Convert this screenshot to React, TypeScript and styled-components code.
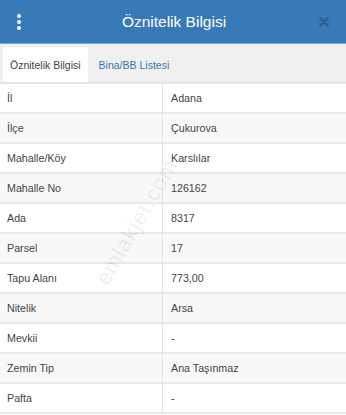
import styled, { createGlobalStyle } from 'styled-components';

const Global = createGlobalStyle`
  html, body {
    margin: 0;
    padding: 0;
    background: #fff;
  }
  body {
    font-family: 'Liberation Sans', Arial, sans-serif;
    -webkit-font-smoothing: antialiased;
  }
`;

const Page = styled.div`
  position: relative;
  width: 346px;
  height: 415px;
  overflow: hidden;
  background: #fff;
`;

const Header = styled.div`
  height: 43px;
  display: grid;
  grid-template-columns: 40px 1fr 40px;
  align-items: center;
  background: #3879b8;
  border-bottom: 1px solid #7aa7d6;
`;

const Title = styled.div`
  text-align: center;
  color: #fff;
  font-size: 15.5px;
  padding-left: 2px;
`;

const MenuButton = styled.div`
  display: flex;
  flex-direction: column;
  align-items: center;
  gap: 2px;
  margin-left: 14px;
  width: 10px;

  span {
    width: 4px;
    height: 4px;
    border-radius: 50%;
    background: #fff;
  }
`;

const Close = styled.div`
  display: flex;
  justify-content: center;
  padding-right: 4px;
`;

const TabBar = styled.div`
  display: flex;
  align-items: flex-end;
  height: 36px;
  padding: 2px 0 0 3px;
  background: #f0f0f0;
  border-bottom: 2px solid #e4e4e4;
`;

const Tab = styled.div<{ $active?: boolean }>`
  height: 35px;
  display: flex;
  align-items: center;
  padding: 0 ${(p) => (p.$active ? '7px' : '9px')};
  margin-right: ${(p) => (p.$active ? '2px' : '0')};
  font-size: 10.5px;
  background: ${(p) => (p.$active ? '#fff' : 'transparent')};
  color: ${(p) => (p.$active ? '#444' : '#3a74ad')};
`;

const Table = styled.div`
  display: flex;
  flex-direction: column;
`;

const Row = styled.div<{ $striped?: boolean }>`
  display: grid;
  grid-template-columns: 162px 1fr;
  height: 28px;
  background: ${(p) => (p.$striped ? '#f8f8f8' : '#fff')};
  border-bottom: 2px solid #e8e8e8;
`;

const Cell = styled.div<{ $value?: boolean }>`
  display: flex;
  align-items: center;
  padding-left: ${(p) => (p.$value ? '8px' : '7px')};
  font-size: 10.7px;
  color: #444;
  border-left: ${(p) => (p.$value ? '1px solid #e2e2e2' : 'none')};
`;

const Watermark = styled.div`
  position: absolute;
  left: 62px;
  top: 207px;
  width: 150px;
  height: 30px;
  line-height: 30px;
  text-align: center;
  transform: rotate(-60deg);
  font-size: 22px;
  color: rgba(0, 0, 0, 0.075);
  letter-spacing: 1px;
  pointer-events: none;
`;

const rows: [string, string][] = [
  ['İl', 'Adana'],
  ['İlçe', 'Çukurova'],
  ['Mahalle/Köy', 'Karslılar'],
  ['Mahalle No', '126162'],
  ['Ada', '8317'],
  ['Parsel', '17'],
  ['Tapu Alanı', '773,00'],
  ['Nitelik', 'Arsa'],
  ['Mevkii', '-'],
  ['Zemin Tip', 'Ana Taşınmaz'],
  ['Pafta', '-'],
];

export default function App() {
  return (
    <Page>
      <Global />
      <Header>
        <MenuButton>
          <span />
          <span />
          <span />
        </MenuButton>
        <Title>Öznitelik Bilgisi</Title>
        <Close>
          <svg width="10" height="10" viewBox="0 0 10 10">
            <path
              d="M1.5 1.5 L8.5 8.5 M8.5 1.5 L1.5 8.5"
              stroke="#2a5f92"
              strokeWidth="2.6"
              strokeLinecap="round"
            />
          </svg>
        </Close>
      </Header>
      <TabBar>
        <Tab $active>Öznitelik Bilgisi</Tab>
        <Tab>Bina/BB Listesi</Tab>
      </TabBar>
      <Table>
        {rows.map(([label, value], i) => (
          <Row key={label} $striped={i % 2 === 1}>
            <Cell>{label}</Cell>
            <Cell $value>{value}</Cell>
          </Row>
        ))}
      </Table>
      <Watermark>emlakjet.com</Watermark>
    </Page>
  );
}
